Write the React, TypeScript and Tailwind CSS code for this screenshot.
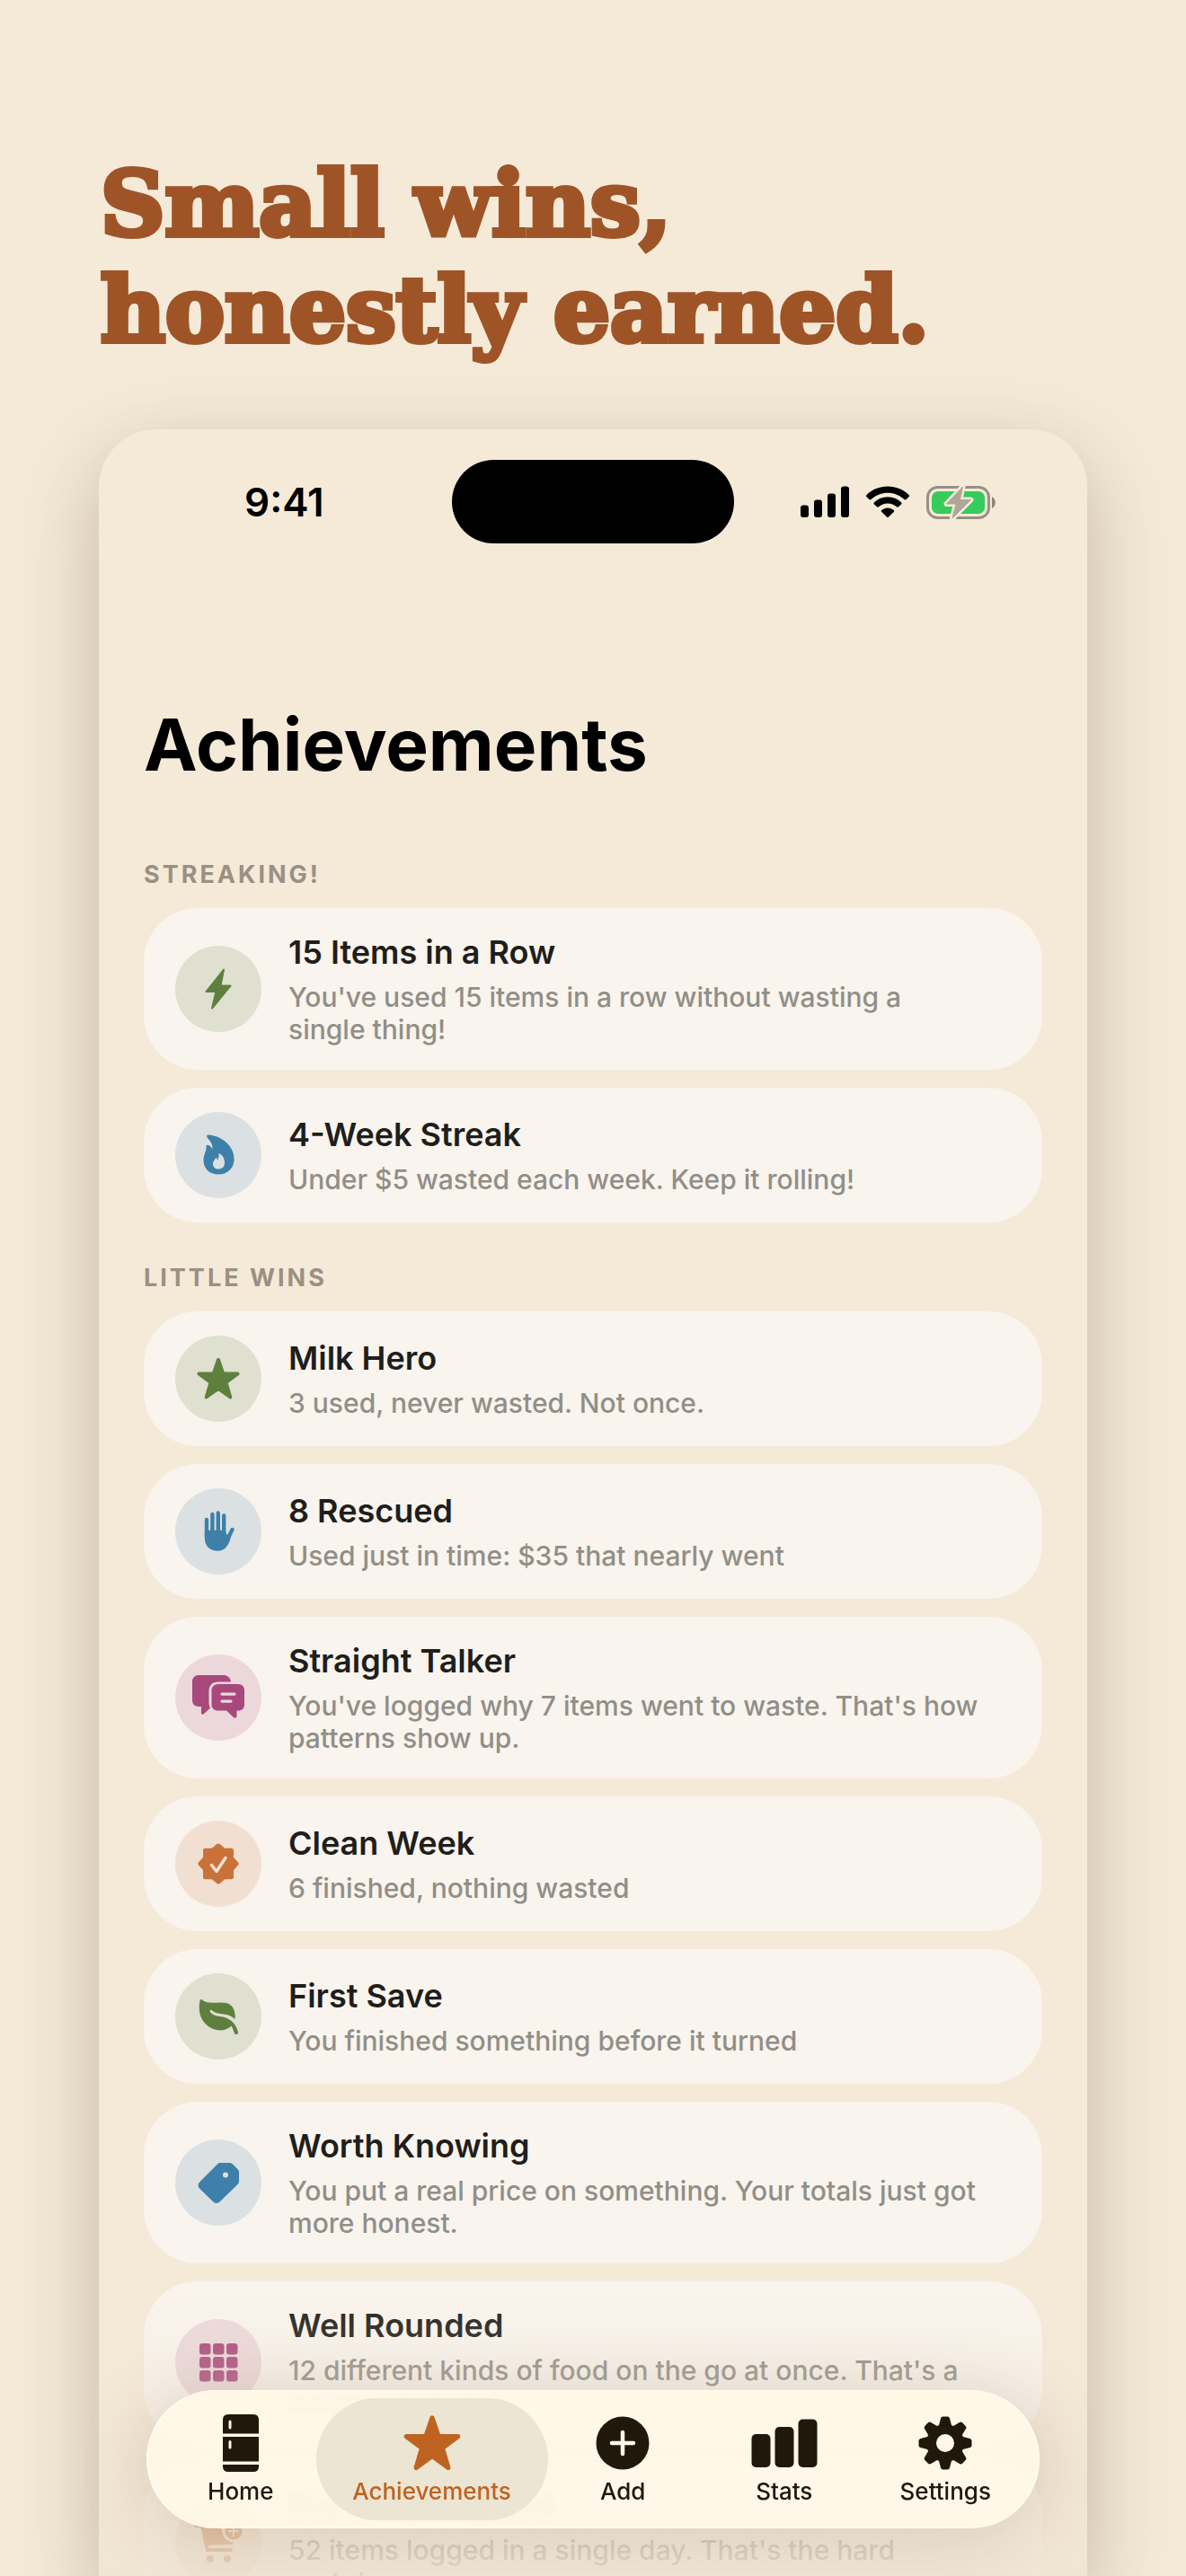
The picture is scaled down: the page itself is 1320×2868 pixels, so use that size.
import type { ReactNode } from 'react';

type Tone = 'green' | 'blue' | 'pink' | 'orange';

interface Achievement {
  title: string;
  detail: string;
  tone: Tone;
  icon: ReactNode;
}

const tones: Record<Tone, string> = {
  green: 'bg-[#dfe0d0] text-[#5f7f3f]',
  blue: 'bg-[#dbe1e3] text-[#3e80a9]',
  pink: 'bg-[#ecd8db] text-[#a8487c]',
  orange: 'bg-[#f1e0d1] text-[#c8723a]',
};

function BoltIcon() {
  return (
    <svg viewBox="0 0 48 48" className="size-12" fill="currentColor" stroke="currentColor" strokeWidth="2" strokeLinejoin="round">
      <path d="M30 2.500 10.500 27H21.500L17 45.500 37.500 20.500H26.500Z" />
    </svg>
  );
}

function FlameIcon() {
  return (
    <svg viewBox="0 0 48 48" className="size-12" fill="currentColor">
      <path
        fillRule="evenodd"
        d="M13 1.500C25 2 42 12 41.500 29.500C41.200 39 34 45.500 24 45.500C14 45.500 7.500 39 7.500 30C7.500 23 11 20 10.500 14.500C10.500 12.500 12.500 12 14 13.500C15.500 14.500 16.500 16 17.500 17C17.800 12 15 8.500 12 5C10.500 3 11 1.500 13 1.500ZM24.500 22C25 25.500 24 27 23.500 29.500C22.500 29 22.300 28 21.500 26.500C20.500 29 18 30.500 18 34C18 37.500 20.500 39.500 24.200 39.500C28.200 39.500 31 37 31 32.500C31 28 29 24 24.500 22Z"
      />
    </svg>
  );
}

function StarIcon({ className }: { className: string }) {
  return (
    <svg viewBox="0 0 48 48" className={className} fill="currentColor" stroke="currentColor" strokeWidth="4" strokeLinejoin="round">
      <path d="M24 3 29.300 18.500H45.500L32.500 28.200 37.300 44.500 24 34.800 10.700 44.500 15.500 28.200 2.500 18.500H18.700Z" />
    </svg>
  );
}

function HandIcon() {
  return (
    <svg viewBox="0 0 48 48" className="size-12" fill="none" stroke="currentColor" strokeWidth="4.400" strokeLinecap="round" strokeLinejoin="round">
      <path d="M11 11V30M17.400 5V27M23.800 3.500V27M30.200 6.500V27M39.500 22 33 35" />
      <path fill="currentColor" d="M11 25H30.200L32.500 31.500 36 29C34 38 30 43.500 23.500 43.500C15.500 43.500 11 39 11 31Z" />
    </svg>
  );
}

function ChatIcon() {
  return (
    <svg viewBox="0 0 60 52" className="h-[52px] w-[60px]" fill="currentColor">
      <path d="M8 1H36C40 1 43.500 4 44 8.500H30C23.500 8.500 19.500 12.500 19.500 19V31C19.500 34 20 36 21 37.500L14 44C12.500 45.500 11 44.500 11 43V36H8C3.500 36 1 33 1 29V8C1 4 4 1 8 1Z" />
      <path
        fillRule="evenodd"
        d="M30 11H52C56.500 11 59 14 59 18V34C59 38 56.500 40.500 52 40.500H50.500V46C50.500 49 48.500 49.500 47 48L39 40.500H30C25.500 40.500 22.500 38 22.500 34V18C22.500 14 25.500 11 30 11ZM34 20.500A1.500 1.500 0 0 0 34 23.700H48A1.500 1.500 0 0 0 48 20.500ZM34 28.500A1.500 1.500 0 0 0 34 31.700H44A1.500 1.500 0 0 0 44 28.500Z"
      />
    </svg>
  );
}

function SealIcon() {
  return (
    <svg viewBox="0 0 48 48" className="size-12" strokeLinecap="round" strokeLinejoin="round">
      <path
        fill="currentColor"
        stroke="currentColor"
        strokeWidth="5"
        d="M24 4 30.200 9.200H38.500V17.800L44 24 38.500 30.200V38.800H30.200L24 44 17.800 38.800H9.500V30.200L4 24 9.500 17.800V9.200H17.800Z"
      />
      <path d="M16.500 25.500 22 32.500 32 17.500" fill="none" stroke="#f1e0d1" strokeWidth="3.500" />
    </svg>
  );
}

function LeafIcon() {
  return (
    <svg viewBox="0 0 48 48" className="size-12" fill="currentColor">
      <path d="M3.500 6.500C4 4.500 5.500 4.500 6.500 6C13 11 25 7 33 9C40.500 11 43.500 18 42.500 27C37.500 22 31 21.500 26.500 21C21 20.300 19 19 16.500 17C15 16 13.800 17.500 15 19C18.500 24 25 23.500 29 24.500C36 26 43.500 31 46 41.500C46.500 44 43 45 42 43C41 40 40 37 38.500 34.500C34.500 38.500 28.500 40.500 22 39C8 36 0 23 3.500 6.500Z" />
    </svg>
  );
}

function TagIcon() {
  return (
    <svg viewBox="0 0 48 48" className="size-12" fill="currentColor">
      <path
        fillRule="evenodd"
        d="M26.500 2H36C38 2 39 2.500 40.500 4L45.500 9C46.500 10 47 11 47 12.500V22C47 24 46.500 25 45 26.500L26 45C23.500 47.500 20.500 47.500 18 45L3.500 31C1 28.500 1 25.500 3.500 23L22.500 4C24 2.500 24.500 2 26.500 2ZM32 12.500A3 3 0 1 0 32 18.500A3 3 0 1 0 32 12.500Z"
      />
    </svg>
  );
}

function GridIcon() {
  return (
    <svg viewBox="0 0 44 44" className="size-11" fill="currentColor">
      {[1, 16, 31].map((y) => [1, 16, 31].map((x) => <rect key={`${x}-${y}`} x={x} y={y} width="12.500" height="12.500" rx="3" />))}
    </svg>
  );
}

function CartIcon() {
  return (
    <svg viewBox="0 0 56 52" className="h-[52px] w-14" fill="none" stroke="currentColor" strokeWidth="4" strokeLinecap="round" strokeLinejoin="round">
      <path d="M3 8H10L16 35H42" />
      <path fill="currentColor" d="M13 13H30L35 24 44 25 42 27 16 28Z" />
      <circle cx="19" cy="45" r="2" fill="currentColor" />
      <circle cx="38" cy="45" r="2" fill="currentColor" />
      <circle cx="45" cy="14" r="11" fill="currentColor" stroke="#f1e0d1" strokeWidth="3" />
      <path d="M45 9V19M40 14H50" stroke="#f1e0d1" strokeWidth="2" />
    </svg>
  );
}

const sections: { heading: string; items: Achievement[] }[] = [
  {
    heading: 'STREAKING!',
    items: [
      { title: '15 Items in a Row', detail: "You've used 15 items in a row without wasting a single thing!", tone: 'green', icon: <BoltIcon /> },
      { title: '4-Week Streak', detail: 'Under $5 wasted each week. Keep it rolling!', tone: 'blue', icon: <FlameIcon /> },
    ],
  },
  {
    heading: 'LITTLE WINS',
    items: [
      { title: 'Milk Hero', detail: '3 used, never wasted. Not once.', tone: 'green', icon: <StarIcon className="size-12" /> },
      { title: '8 Rescued', detail: 'Used just in time: $35 that nearly went', tone: 'blue', icon: <HandIcon /> },
      { title: 'Straight Talker', detail: "You've logged why 7 items went to waste. That's how patterns show up.", tone: 'pink', icon: <ChatIcon /> },
      { title: 'Clean Week', detail: '6 finished, nothing wasted', tone: 'orange', icon: <SealIcon /> },
      { title: 'First Save', detail: 'You finished something before it turned', tone: 'green', icon: <LeafIcon /> },
      { title: 'Worth Knowing', detail: 'You put a real price on something. Your totals just got more honest.', tone: 'blue', icon: <TagIcon /> },
      { title: 'Well Rounded', detail: "12 different kinds of food on the go at once. That's a balanced kitchen.", tone: 'pink', icon: <GridIcon /> },
      { title: 'Big Shop Logged', detail: "52 items logged in a single day. That's the hard part\u00a0done.", tone: 'orange', icon: <CartIcon /> },
    ],
  },
];

function StatusBar() {
  return (
    <div className="grid grid-cols-[1fr_314px_1fr] items-center pt-[34px]">
      <span className="pl-[162px] text-[44px] leading-none font-semibold">9:41</span>
      <div className="h-[93px] rounded-full bg-black" />
      <div className="flex items-center gap-[19px] pl-[74px]">
        <svg viewBox="0 0 54 36" className="h-9 w-[54px]">
          <rect x="0" y="21.500" width="9" height="13.500" rx="3" />
          <rect x="15" y="15.500" width="9" height="19.500" rx="3" />
          <rect x="30" y="8.500" width="9" height="26.500" rx="3" />
          <rect x="45" y="0.500" width="9" height="34.500" rx="3" />
        </svg>
        <svg viewBox="0 0 48 36" className="h-9 w-12">
          <path d="M24 0.500C33 0.500 41.500 4 47.500 10C48.200 10.700 48.200 11.500 47.500 12.200L44.600 15C44 15.600 43.200 15.600 42.500 15C37.500 10.300 31 7.700 24 7.700S10.500 10.300 5.500 15C4.800 15.600 4 15.600 3.400 15L0.500 12.200C-0.200 11.500-0.200 10.700 0.500 10C6.500 4 15 0.500 24 0.500Z" />
          <path d="M24 12.300C30 12.300 35 14.500 39 18.200C39.700 18.900 39.700 19.700 39 20.400L36 23.300C35.400 23.900 34.600 23.900 34 23.300C31.300 20.900 27.800 19.500 24 19.500S16.700 20.900 14 23.300C13.400 23.900 12.600 23.900 12 23.300L9 20.400C8.300 19.700 8.300 18.900 9 18.200C13 14.500 18 12.300 24 12.300Z" />
          <path d="M24 24.500C26.700 24.500 28.800 25.400 30.700 26.900C31.400 27.500 31.400 28.300 30.700 29L25 34.500C24.300 35.200 23.700 35.200 23 34.500L17.300 29C16.600 28.300 16.600 27.500 17.300 26.900C19.200 25.400 21.300 24.500 24 24.500Z" />
        </svg>
        <svg viewBox="0 0 78 38" className="h-[38px] w-[78px]">
          <rect x="1.500" y="2.500" width="68" height="34" rx="11" fill="none" stroke="#979084" strokeWidth="3" />
          <rect x="6" y="7" width="59" height="25" rx="7" fill="#35cc5c" />
          <path d="M73 13C78 15.500 78 23.500 73 26Z" fill="#8d857a" />
          <path d="M40.500 2 22.500 21H33L29 37 49.500 16.500H37.500Z" fill="#b0a697" stroke="#f5ead8" strokeWidth="6" strokeLinejoin="round" />
          <path d="M40.500 2 22.500 21H33L29 37 49.500 16.500H37.500Z" fill="#b0a697" stroke="#b0a697" strokeLinejoin="round" />
        </svg>
      </div>
    </div>
  );
}

function AchievementCard({ title, detail, tone, icon }: Achievement) {
  return (
    <li className="flex items-center gap-[30px] rounded-[60px] bg-[#f9f4ed] py-[27px] pr-16 pl-[35px]">
      <div className={`flex size-24 shrink-0 items-center justify-center rounded-full ${tones[tone]}`}>{icon}</div>
      <div>
        <h3 className="text-[36px] leading-[44px] font-semibold text-[#1f1e1c]">{title}</h3>
        <p className="mt-[10px] text-[30px] leading-9 font-medium text-[#918e88]">{detail}</p>
      </div>
    </li>
  );
}

const tabs: { label: string; icon: ReactNode; active?: boolean }[] = [
  {
    label: 'Home',
    icon: (
      <svg viewBox="0 0 42 66" className="h-[66px] w-[42px]" fill="currentColor">
        <path fillRule="evenodd" d="M7 1H35Q41 1 41 7V22.500H1V7Q1 1 7 1ZM7.500 9V16A1.500 1.500 0 0 0 10.500 16V9A1.500 1.500 0 0 0 7.500 9Z" />
        <path fillRule="evenodd" d="M1 26H41V53.500H1ZM7.500 31.500V38A1.500 1.500 0 0 0 10.500 38V31.500A1.500 1.500 0 0 0 7.500 31.500Z" />
        <path d="M1 57H41V59Q41 65 35 65H7Q1 65 1 59Z" />
      </svg>
    ),
  },
  { label: 'Achievements', icon: <StarIcon className="size-16" />, active: true },
  {
    label: 'Add',
    icon: (
      <svg viewBox="0 0 60 60" className="size-[60px]">
        <circle cx="30" cy="30" r="29.500" fill="currentColor" />
        <path d="M30 18V42M18 30H42" stroke="#fff8e8" strokeWidth="4.500" strokeLinecap="round" />
      </svg>
    ),
  },
  {
    label: 'Stats',
    icon: (
      <svg viewBox="0 0 74 54" className="h-[54px] w-[74px]" fill="currentColor">
        <rect x="0.500" y="17" width="21" height="37" rx="5" />
        <rect x="26.500" y="9" width="21" height="45" rx="5" />
        <rect x="52.500" y="0.500" width="21" height="53.500" rx="5" />
      </svg>
    ),
  },
  {
    label: 'Settings',
    icon: (
      <svg viewBox="0 0 60 60" className="size-[60px]" fill="currentColor">
        {[0, 45, 90, 135, 180, 225, 270, 315].map((angle) => (
          <path key={angle} d="M22 14 25 2.500Q25.500 0.500 27.500 0.500H32.500Q34.500 0.500 35 2.500L38 14Z" transform={`rotate(${angle} 30 30)`} />
        ))}
        <path fillRule="evenodd" d="M30 9A21 21 0 1 0 30 51A21 21 0 1 0 30 9ZM30 20A10 10 0 1 1 30 40A10 10 0 1 1 30 20Z" />
      </svg>
    ),
  },
];

function TabBar() {
  return (
    <nav className="absolute inset-x-[53px] bottom-[53px] flex -space-x-3 rounded-full border-2 border-[#fffbea] bg-[#fff8e7]/95 p-[7px] shadow-[0_8px_80px_rgba(90,60,20,0.18)] backdrop-blur-[3px]">
      {tabs.map(({ label, icon, active }) => (
        <button
          key={label}
          type="button"
          aria-current={active ? 'page' : undefined}
          className={
            active
              ? 'flex h-[136px] w-[258px] flex-col items-center rounded-full bg-[#ede5d3] text-[#be6321]'
              : 'flex h-[136px] flex-1 flex-col items-center rounded-full text-[#20180b]'
          }
        >
          <span className="mt-4 flex h-[68px] items-center justify-center">{icon}</span>
          <span className="mt-1 text-[26px] leading-8 font-medium">{label}</span>
        </button>
      ))}
    </nav>
  );
}

export default function App() {
  return (
    <div className="flex h-screen flex-col overflow-hidden bg-[#f5ead8] font-[Inter,sans-serif] text-black">
      <h1 className="px-[112px] pt-[168px] font-['DejaVu_Serif',serif] text-[99px] leading-[118px] font-bold text-[#9f5427] [-webkit-text-stroke:6px_#9f5427]">
        Small wins,
        <br />
        honestly earned.
      </h1>

      <main className="relative mx-[110px] mt-[74px] min-h-0 flex-1 rounded-t-[64px] bg-[#f5ead8] shadow-[0_30px_90px_rgba(80,65,35,0.3)]">
        <div className="h-full overflow-hidden rounded-t-[64px]">
          <StatusBar />
          <div className="px-[50px]">
            <h2 className="mt-[174px] text-[80px] leading-[100px] font-bold">Achievements</h2>
            {sections.map(({ heading, items }, index) => (
              <section key={heading} className={index === 0 ? 'mt-[77px]' : 'mt-[44px]'}>
                <h3 className="text-[27px] leading-9 font-bold tracking-[3px] text-[#9a9083]">{heading}</h3>
                <ul className="mt-[19px] flex flex-col gap-5">
                  {items.map((item) => (
                    <AchievementCard key={item.title} {...item} />
                  ))}
                </ul>
              </section>
            ))}
          </div>
        </div>

        {/* Fades the list out under the tab bar */}
        <div className="absolute inset-x-0 bottom-0 h-[330px] bg-linear-to-b from-[#f0e4d3]/0 via-[#f0e4d3]/35 to-[#f0e4d3]/85" />
        <TabBar />
      </main>
    </div>
  );
}
